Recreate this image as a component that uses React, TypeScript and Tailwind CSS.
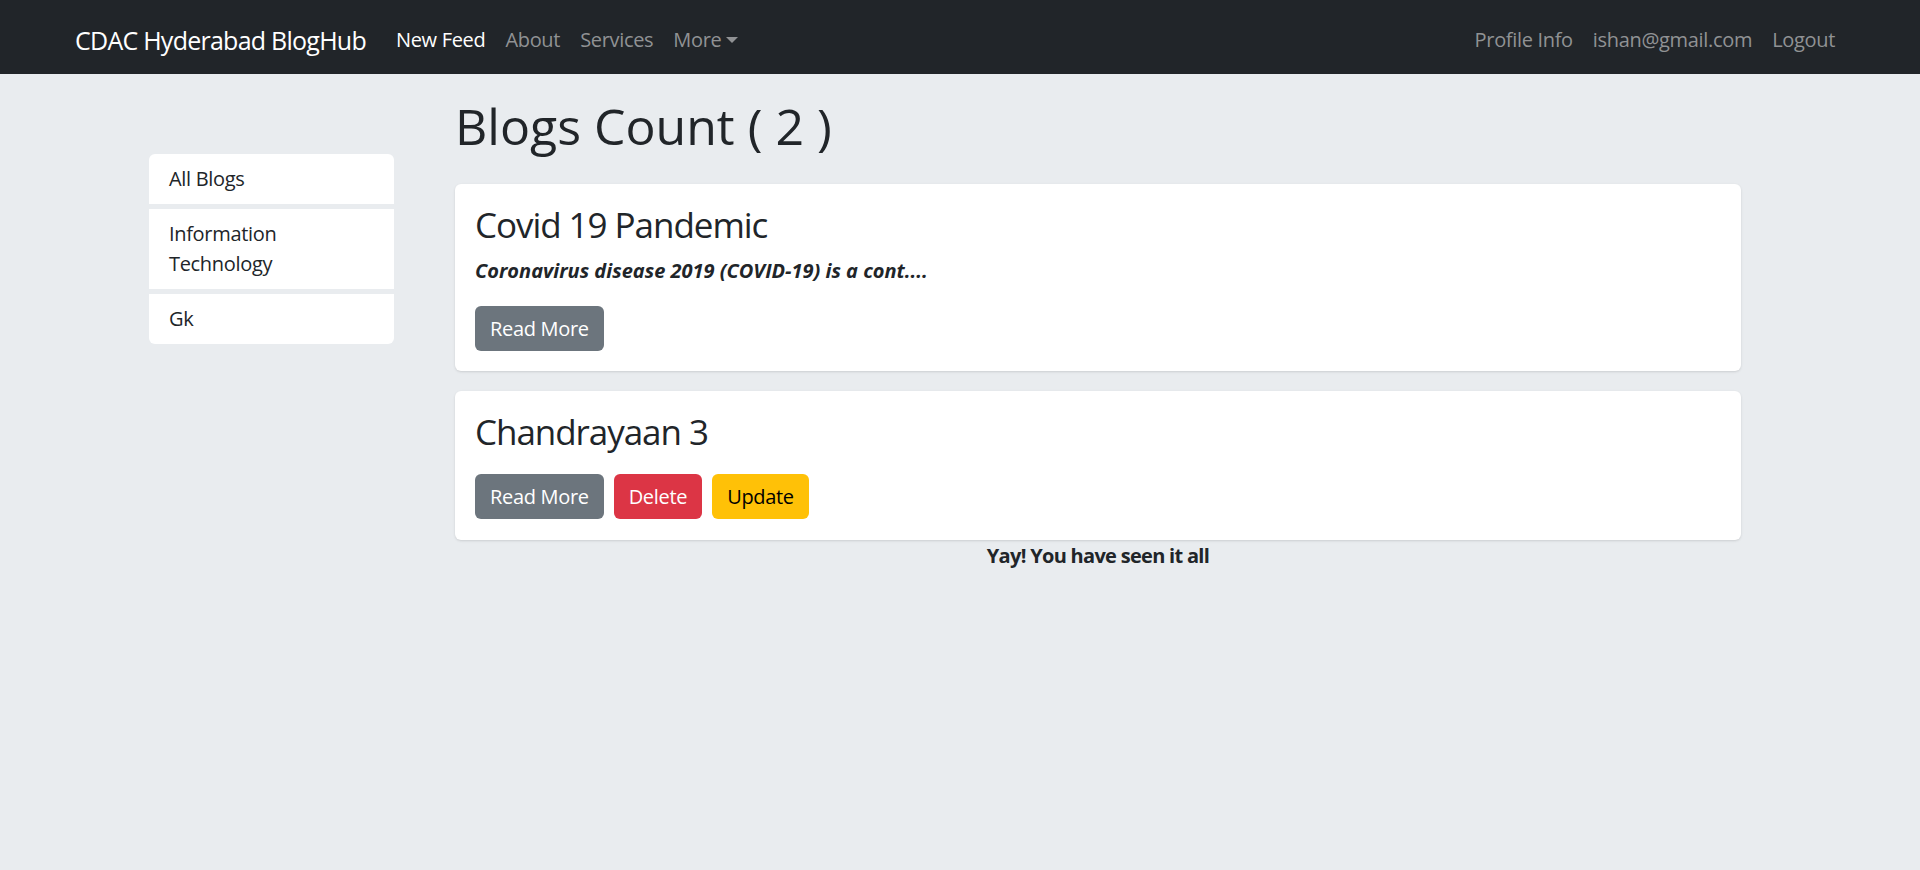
import React from "react";

const font = { fontFamily: '"Segoe UI", "Open Sans", "Noto Sans", sans-serif' };

const navLinks = ["About", "Services"];
const rightLinks = ["Profile Info", "ishan@gmail.com", "Logout"];
const categories = ["All Blogs", "Information Technology", "Gk"];

const Navbar = () => {
  return (
    <nav className="flex h-[74px] items-center justify-between bg-[#212529] px-[75px] pt-[5px] text-[20px] leading-[30px]">
      <div className="flex items-center">
        <span className="mr-[20px] text-[25px] tracking-[-0.03em] text-white">
          CDAC Hyderabad BlogHub
        </span>
        <span className="px-[10px] text-white">New Feed</span>
        {navLinks.map((link) => (
          <span key={link} className="px-[10px] text-[#909294]">
            {link}
          </span>
        ))}
        <span className="flex items-center px-[10px] text-[#909294]">
          More
          <span className="ml-[5px] h-0 w-0 border-x-[6px] border-t-[6px] border-x-transparent border-t-[#909294]" />
        </span>
      </div>
      <div className="flex items-center">
        {rightLinks.map((link) => (
          <span key={link} className="px-[10px] text-[#909294]">
            {link}
          </span>
        ))}
      </div>
    </nav>
  );
};

const Sidebar = () => {
  return (
    <div className="mt-[80px] flex w-[245px] flex-col gap-[5px]">
      {categories.map((c, i) => (
        <div
          key={c}
          className={`bg-white px-[20px] py-[10px] pr-[90px] text-[20px] leading-[30px] text-[#212529] ${
            i === 0 ? "rounded-t-[6px]" : ""
          } ${i === categories.length - 1 ? "rounded-b-[6px]" : ""}`}
        >
          {c}
        </div>
      ))}
    </div>
  );
};

const Button = ({
  label,
  color,
}: {
  label: string;
  color: "gray" | "red" | "yellow";
}) => {
  const styles = {
    gray: "bg-[#6c757d] text-white",
    red: "bg-[#dc3545] text-white",
    yellow: "bg-[#ffc107] text-black",
  };
  return (
    <button
      className={`h-[45px] rounded-[6px] px-[15px] text-[20px] leading-[30px] ${styles[color]}`}
    >
      {label}
    </button>
  );
};

const App = () => {
  return (
    <div
      className="min-h-screen bg-[#e9ecef] tracking-[-0.02em] text-[#212529]"
      style={font}
    >
      <Navbar />
      <div className="flex pl-[149px]">
        <Sidebar />
        <div className="ml-[61px] w-[1286px]">
          <h1 className="mt-[22px] text-[50px] leading-[60px] font-normal tracking-normal">
            Blogs Count ( 2 )
          </h1>
          <div className="mt-[28px] flex flex-col gap-[20px]">
            <div className="rounded-[6px] bg-white p-[20px] shadow-sm">
              <h3 className="text-[35px] leading-[42px] font-normal tracking-[-0.03em]">
                Covid 19 Pandemic
              </h3>
              <p className="mt-[10px] text-[20px] leading-[30px] font-bold tracking-normal italic">
                Coronavirus disease 2019 (COVID-19) is a cont....
              </p>
              <div className="mt-[20px] flex gap-[10px]">
                <Button label="Read More" color="gray" />
              </div>
            </div>
            <div className="rounded-[6px] bg-white px-[20px] pt-[20px] pb-[21px] shadow-sm">
              <h3 className="text-[35px] leading-[42px] font-normal tracking-[-0.03em]">
                Chandrayaan 3
              </h3>
              <div className="mt-[21px] flex gap-[10px]">
                <Button label="Read More" color="gray" />
                <Button label="Delete" color="red" />
                <Button label="Update" color="yellow" />
              </div>
            </div>
          </div>
          <p className="mt-[1px] text-center text-[20px] leading-[30px] font-bold tracking-[-0.035em]">
            Yay! You have seen it all
          </p>
        </div>
      </div>
    </div>
  );
};

export default App;
